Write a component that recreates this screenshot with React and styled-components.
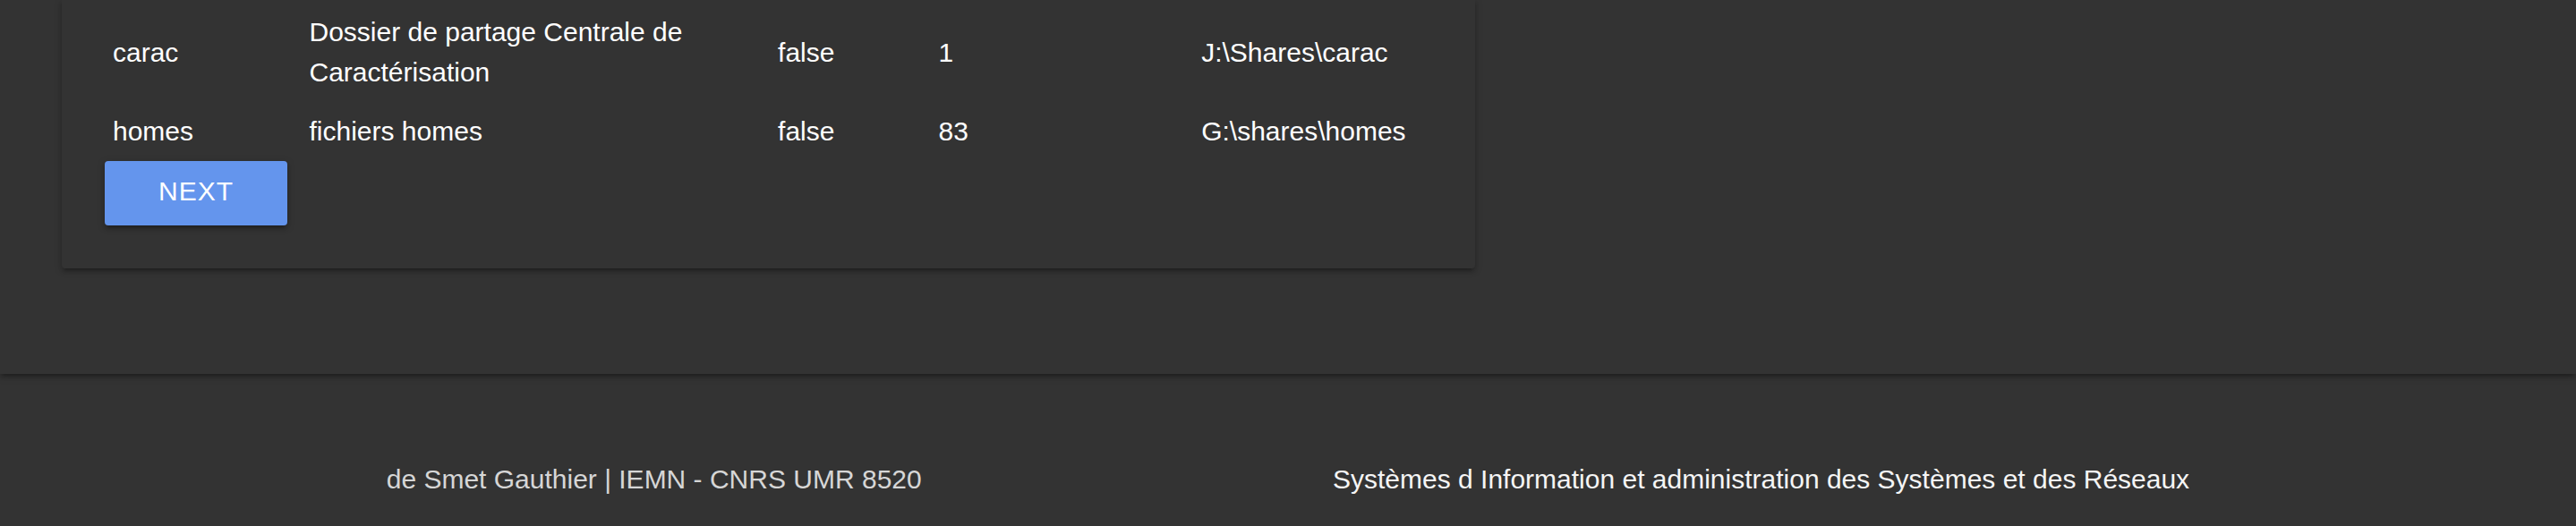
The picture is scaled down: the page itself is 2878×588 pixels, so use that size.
import React from "react";
import styled, { createGlobalStyle } from "styled-components";

const GlobalStyle = createGlobalStyle`
  *, *::before, *::after { box-sizing: border-box; }
  body {
    margin: 0;
    background: #333;
    color: #fff;
    font-family: "Liberation Sans", Arial, sans-serif;
    font-size: 30px;
    line-height: 45px;
  }
`;

const raised =
  "0 4px 4px 0 rgba(0,0,0,.14), 0 6px 2px -4px rgba(0,0,0,.12), 0 2px 10px 0 rgba(0,0,0,.2)";

const Main = styled.main`
  padding: 0 46px 118px;
  box-shadow: ${raised};
`;

const Column = styled.div`
  width: calc(100% * 7 / 12);
  padding: 0 23px;
`;

const Card = styled.section`
  padding: 0 48px 48px;
  border-radius: 0 0 4px 4px;
  box-shadow: ${raised};
`;

const Table = styled.table`
  width: 100%;
  table-layout: fixed;
  border-collapse: collapse;
`;

const Col = styled.col`
  width: ${(p) => p.$share}%;
`;

const Cell = styled.td`
  padding: 10px 9px;
  vertical-align: middle;

  tr:first-child > & { padding-top: 13px; padding-bottom: 11px; }
`;

const NextButton = styled.button`
  display: block;
  height: 72px;
  margin-top: 1px;
  padding: 0 60px 6px;
  border: 0;
  border-radius: 4px;
  background: #6495ed;
  color: #fff;
  font: inherit;
  letter-spacing: 1px;
  text-transform: uppercase;
  box-shadow: ${raised};
  cursor: pointer;
`;

const Footer = styled.footer`
  display: grid;
  grid-template-columns: 1fr 1fr;
  width: 70%;
  margin: 0 auto;
  padding: 95px 0 29px;
`;

const Credit = styled.p`
  margin: 0;
  color: #d6d6d6;
`;

const Department = styled.p`
  margin: 0;
  padding-left: 50px;
  color: #f5f5f5;
  white-space: nowrap;
`;

const shares = [
  ["carac", "Dossier de partage Centrale de Caractérisation", "false", "1", "J:\\Shares\\carac"],
  ["homes", "fichiers homes", "false", "83", "G:\\shares\\homes"],
];

const columnWidths = [14.8, 35.3, 12.1, 19.8, 18];

export default function App() {
  return (
    <>
      <GlobalStyle />
      <Main>
        <Column>
          <Card>
            <Table>
              <colgroup>
                {columnWidths.map((share, i) => (
                  <Col key={i} $share={share} />
                ))}
              </colgroup>
              <tbody>
                {shares.map((row) => (
                  <tr key={row[0]}>
                    {row.map((value, i) => (
                      <Cell key={i}>{value}</Cell>
                    ))}
                  </tr>
                ))}
              </tbody>
            </Table>
            <NextButton type="button">Next</NextButton>
          </Card>
        </Column>
      </Main>
      <Footer>
        <Credit>de Smet Gauthier | IEMN - CNRS UMR 8520</Credit>
        <Department>Systèmes d Information et administration des Systèmes et des Réseaux</Department>
      </Footer>
    </>
  );
}
